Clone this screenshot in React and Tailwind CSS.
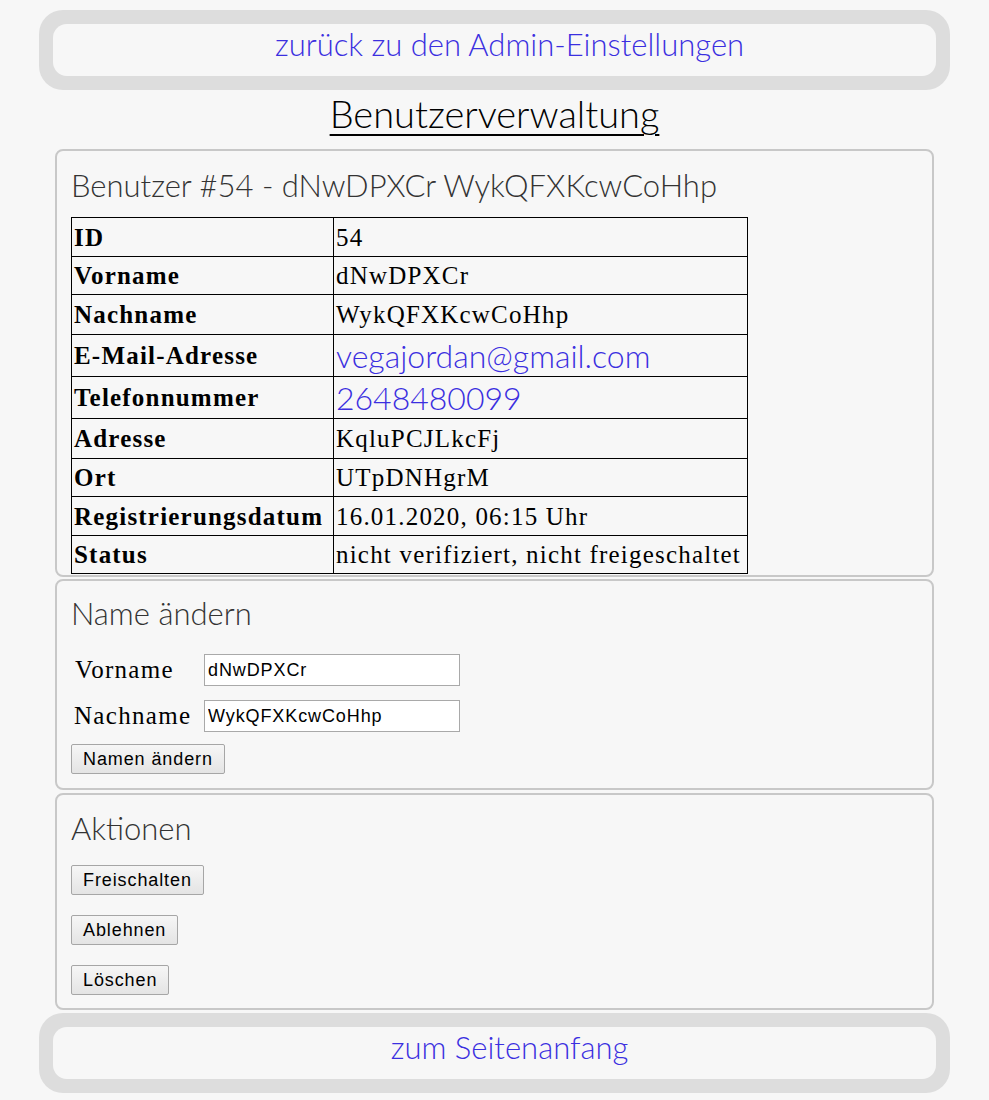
const rows = [
  { label: "ID", value: "54", h: "h-[39px]" },
  { label: "Vorname", value: "dNwDPXCr", h: "h-[38px]" },
  { label: "Nachname", value: "WykQFXKcwCoHhp", h: "h-[40px]" },
  { label: "E-Mail-Adresse", value: "vegajordan@gmail.com", h: "h-[42px]", link: "text-[32px]" },
  { label: "Telefonnummer", value: "2648480099", h: "h-[42px]", link: "text-[32px]" },
  { label: "Adresse", value: "KqluPCJLkcFj", h: "h-[40px]" },
  { label: "Ort", value: "UTpDNHgrM", h: "h-[38px]" },
  { label: "Registrierungsdatum", value: "16.01.2020, 06:15 Uhr", h: "h-[39px]" },
  { label: "Status", value: "nicht verifiziert, nicht freigeschaltet", h: "h-[38px]" },
];

const NavBox = ({ children }) => (
  <div className="mx-[39px] rounded-[24px] bg-[#dddddd] p-[14px]">
    <div className="flex h-[52px] items-start justify-center rounded-[14px] bg-[#f7f7f7] pt-[1px] pl-[30px]">
      <a href="#" className="text-[31px] font-light leading-[38px] text-[#3b2fe0]">
        {children}
      </a>
    </div>
  </div>
);

const Card = ({ title, children, className = "" }) => (
  <section
    className={`mx-[55px] rounded-[8px] border-2 border-[#c8c8c8] bg-[#f7f7f7] px-[14px] ${className}`}
  >
    <h2 className="text-[31px] font-light leading-[40px] text-[#333]">{title}</h2>
    {children}
  </section>
);

const Btn = ({ children }) => (
  <button className="h-[30px] rounded-[2px] border border-[#a6a6a6] bg-gradient-to-b from-[#f6f6f6] to-[#e4e4e4] px-[11px] font-['Liberation_Sans',Arial,sans-serif] text-[18px] leading-none tracking-[0.9px] text-black">
    {children}
  </button>
);

const inputCls =
  "h-[32px] w-[256px] border border-[#a9a9a9] bg-white px-[3px] font-['Liberation_Sans',Arial,sans-serif] text-[18px] tracking-[0.9px] text-black";

export default function App() {
  return (
    <div className="min-h-[1100px] bg-[#f7f7f7] pt-[10px] font-['Lato',sans-serif]">
      <NavBox>zurück zu den Admin-Einstellungen</NavBox>

      <h1 className="mb-[13px] text-center text-[38px] font-light leading-[46px] text-black underline decoration-[2px] underline-offset-[6px]">
        Benutzerverwaltung
      </h1>

      <Card title="Benutzer #54 - dNwDPXCr WykQFXKcwCoHhp" className="pt-[14px]">
        <table className="mt-[12px] mb-[1px] border-collapse border-[1.5px] border-black font-['Liberation_Serif','Times_New_Roman',serif] text-[25px] tracking-[1.2px] text-black">
          <tbody>
            {rows.map((r) => (
              <tr key={r.label} className={r.h}>
                <td className="w-[262px] whitespace-nowrap border-[1.5px] border-black px-[2px] py-0 font-bold leading-none">
                  {r.label}
                </td>
                <td className="w-[414px] whitespace-nowrap border-[1.5px] border-black px-[2px] py-0 leading-none">
                  {r.link ? (
                    <a href="#" className={`font-['Lato',sans-serif] font-light tracking-normal text-[#3b2fe0] ${r.link}`}>
                      {r.value}
                    </a>
                  ) : (
                    r.value
                  )}
                </td>
              </tr>
            ))}
          </tbody>
        </table>
      </Card>

      <Card title="Name ändern" className="mt-[2px] pt-[12px] pb-[14px]">
        <div className="mt-[21px] flex flex-col gap-[14px] font-['Liberation_Serif','Times_New_Roman',serif] text-[25px] leading-[32px] tracking-[1.3px] text-black">
          <label className="flex h-[32px] items-center">
            <span className="w-[133px] pl-[4px]">Vorname</span>
            <input defaultValue="dNwDPXCr" className={inputCls} />
          </label>
          <label className="flex h-[32px] items-center">
            <span className="w-[133px] pl-[3px]">Nachname</span>
            <input defaultValue="WykQFXKcwCoHhp" className={inputCls} />
          </label>
        </div>
        <div className="mt-[12px] flex">
          <Btn>Namen ändern</Btn>
        </div>
      </Card>

      <Card title="Aktionen" className="mt-[3px] pt-[13px] pb-[13px]">
        <div className="mt-[17px] flex flex-col items-start gap-[20px]">
          <Btn>Freischalten</Btn>
          <Btn>Ablehnen</Btn>
          <Btn>Löschen</Btn>
        </div>
      </Card>

      <div className="mt-[3px]">
        <NavBox>zum Seitenanfang</NavBox>
      </div>
    </div>
  );
}
